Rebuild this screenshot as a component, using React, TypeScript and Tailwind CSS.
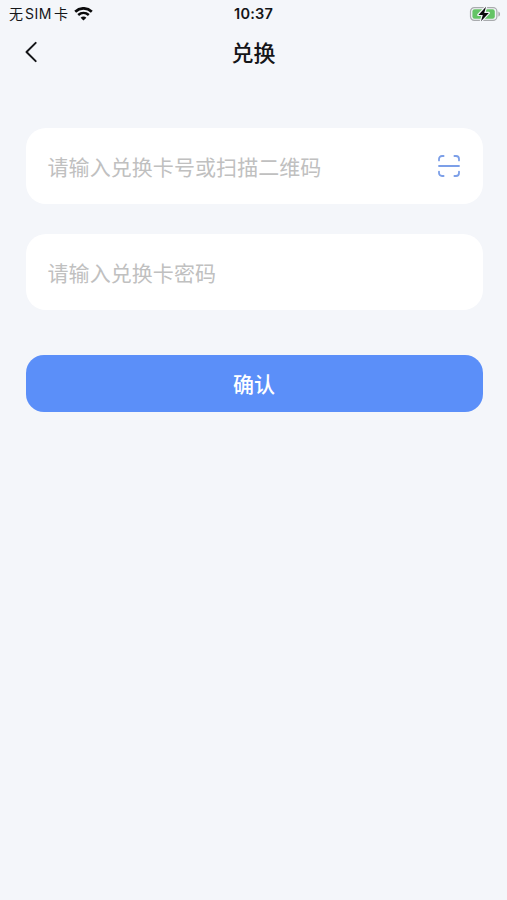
import type { ReactNode } from "react";

const WifiIcon = () => (
  <svg width="19" height="14" viewBox="0 0 19 14" fill="none">
    <path d="M1.2 4.7C6 .2 13 .2 17.8 4.7" stroke="#0b0b0c" strokeWidth="2.7" />
    <path d="M4.2 8c3.1-2.8 7.5-2.8 10.6 0" stroke="#0b0b0c" strokeWidth="2.5" />
    <path d="M9.5 13.6 6.6 10.7c1.6-1.5 4.2-1.5 5.8 0z" fill="#0b0b0c" />
  </svg>
);

const BatteryIcon = () => (
  <svg width="32" height="16" viewBox="0 0 32 16" fill="none">
    <rect x="1.5" y="1.6" width="26.4" height="12.8" rx="3.8" stroke="#a9abae" strokeWidth="1.2" />
    <rect x="3.4" y="3.3" width="22.4" height="9.4" rx="2.2" fill="#65c466" />
    <path d="M29.4 5.4c2.2.9 2.2 4.3 0 5.2z" fill="#a9abae" />
    <path
      d="M17 .8 9.4 8.9h4.4l-1.8 6.3 7.8-8.2h-4.6z"
      fill="#0b0b0c"
      stroke="#f4f6fa"
      strokeWidth="2.4"
      strokeLinejoin="round"
      paintOrder="stroke"
    />
  </svg>
);

const BackIcon = () => (
  <svg width="14" height="22" viewBox="0 0 14 22" fill="none">
    <path
      d="M11.7 1.9 2.5 11l9.2 9.1"
      stroke="#141518"
      strokeWidth="2"
      strokeLinecap="round"
      strokeLinejoin="round"
    />
  </svg>
);

const ScanIcon = () => (
  <svg width="24" height="24" viewBox="0 0 24 24" fill="none" stroke="#7c9fe8" strokeWidth="1.8" strokeLinecap="round">
    <path d="M2 6.4V5a3 3 0 0 1 3-3h1.6" />
    <path d="M17.4 2H19a3 3 0 0 1 3 3v1.4" />
    <path d="M22 17.6V19a3 3 0 0 1-3 3h-1.6" />
    <path d="M6.6 22H5a3 3 0 0 1-3-3v-1.4" />
    <path d="M2 12h20" />
  </svg>
);

const Field = ({ label, children }: { label: string; children?: ReactNode }) => (
  <div className="flex h-[76px] items-center justify-between rounded-[20px] bg-white pr-[21.5px] pl-[22px]">
    <span className="pt-[3px] text-[21px] leading-7 font-normal tracking-[0.07px] whitespace-nowrap text-[#c0c0c0]">
      {label}
    </span>
    {children}
  </div>
);

const App = () => {
  return (
    <div className="min-h-screen bg-[#f4f6fa] font-['Inter','Noto_Sans_CJK_SC',sans-serif] text-[#141518]">
      {/* STATUS BAR */}
      <div className="grid h-[27px] grid-cols-[1fr_60px_1fr] items-center px-[6px]">
        <div className="flex items-center gap-[6px] pl-[3px] text-[14px] leading-5">
          <span className="flex gap-[2px] whitespace-nowrap">
            <span>无</span>
            <span className="tracking-[0.5px]">SIM</span>
            <span>卡</span>
          </span>
          <WifiIcon />
        </div>
        <span className="text-center text-[14.5px] leading-5 font-semibold tracking-[0.2px]">10:37</span>
        <div className="flex justify-end">
          <BatteryIcon />
        </div>
      </div>

      {/* NAV BAR */}
      <div className="grid h-[50px] grid-cols-[40px_1fr_40px] items-center px-6">
        <button aria-label="返回">
          <BackIcon />
        </button>
        <h1 className="pt-[2px] text-center text-[22px] leading-7 font-medium">兑换</h1>
      </div>

      {/* FORM */}
      <div className="flex flex-col pt-[51px] pr-[24.5px] pl-[25.5px]">
        <div className="flex flex-col gap-[30px]">
          <Field label="请输入兑换卡号或扫描二维码">
            <ScanIcon />
          </Field>
          <Field label="请输入兑换卡密码" />
        </div>
        <button className="mt-[45px] h-[57px] rounded-[18px] bg-[#5b8ff9] pt-[2px] text-[21px] leading-7 font-medium text-white">
          确认
        </button>
      </div>
    </div>
  );
};

export default App;
